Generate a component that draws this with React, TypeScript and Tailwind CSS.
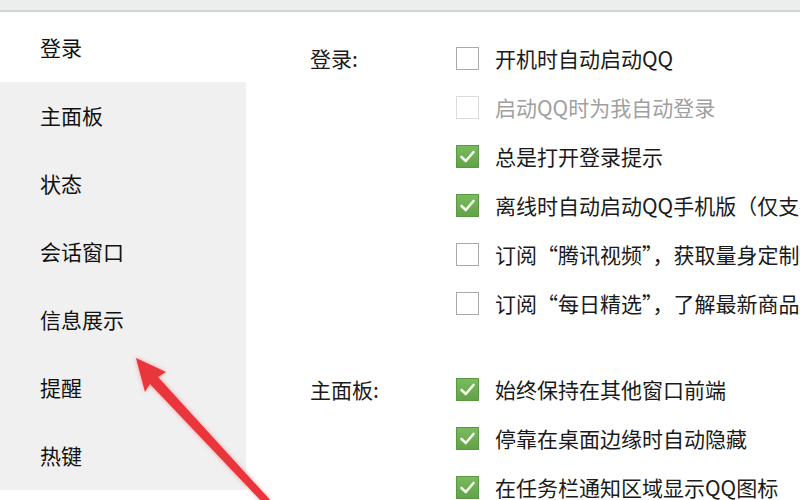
import React from "react";

const font = { fontFamily: '"Noto Sans CJK SC", "Noto Sans", sans-serif' };

type Opt = { text: string; checked?: boolean; disabled?: boolean };

const groups: { label: string; options: Opt[] }[] = [
  {
    label: "登录:",
    options: [
      { text: "开机时自动启动QQ" },
      { text: "启动QQ时为我自动登录", disabled: true },
      { text: "总是打开登录提示", checked: true },
      { text: "离线时自动启动QQ手机版（仅支持安卓手机）", checked: true },
      { text: "订阅“腾讯视频”，获取量身定制的精彩内容" },
      { text: "订阅“每日精选”，了解最新商品资讯" },
    ],
  },
  {
    label: "主面板:",
    options: [
      { text: "始终保持在其他窗口前端", checked: true },
      { text: "停靠在桌面边缘时自动隐藏", checked: true },
      { text: "在任务栏通知区域显示QQ图标", checked: true },
    ],
  },
];

const menu = ["登录", "主面板", "状态", "会话窗口", "信息展示", "提醒", "热键"];

function Box({ checked, disabled }: { checked?: boolean; disabled?: boolean }) {
  if (checked) {
    return (
      <div className="w-[23px] h-[23px] shrink-0 bg-gradient-to-b from-[#7abb5e] to-[#62a248] border border-[#5a9842] flex items-center justify-center">
        <svg width="17" height="17" viewBox="0 0 17 17">
          <path d="M2.5 9 L6.8 13 L14.5 4" fill="none" stroke="#f4fbef" strokeWidth="2.6" strokeLinecap="round" strokeLinejoin="round" />
        </svg>
      </div>
    );
  }
  return (
    <div
      className={
        "w-[23px] h-[23px] shrink-0 bg-white border " +
        (disabled ? "border-[#dcdcdc]" : "border-[#a9a9a9]")
      }
    />
  );
}

export default function App() {
  return (
    <div lang="zh-CN" className="relative w-[800px] h-[500px] overflow-hidden bg-white" style={font}>
      <div className="h-[10px] bg-[#eceeed]" />
      <div className="h-[2px] bg-[#d3d5d4]" />
      <div className="flex">
        {/* sidebar */}
        <div className="w-[246px] shrink-0 flex flex-col pt-[2px]">
          {menu.map((m, i) => (
            <div
              key={m}
              className={
                "h-[68px] flex items-center pl-[40px] text-[21px] text-[#111] " +
                (i === 0 ? "bg-white" : "bg-[#f0f0f0]")
              }
            >
              {m}
            </div>
          ))}
        </div>

        {/* content */}
        <div className="flex-1 flex flex-col pt-[22px] pl-[64px] gap-[37px]">
          {groups.map((g) => (
            <div key={g.label} className="flex">
              <div className="w-[146px] shrink-0 h-[49px] flex items-center text-[21px] text-[#1a1a1a]">
                {g.label}
              </div>
              <div className="flex flex-col">
                {g.options.map((o) => (
                  <div key={o.text} className="h-[49px] flex items-center gap-[16px] whitespace-nowrap">
                    <Box checked={o.checked} disabled={o.disabled} />
                    <span className={"text-[21px] " + (o.disabled ? "text-[#a0a0a0]" : "text-[#1a1a1a]")}>
                      {o.text}
                    </span>
                  </div>
                ))}
              </div>
            </div>
          ))}
        </div>
      </div>

      {/* red annotation arrow */}
      <svg
        className="absolute left-0 top-0 pointer-events-none"
        width="800"
        height="500"
        style={{ filter: "drop-shadow(0 0 2px rgba(255,90,90,0.6))" }}
      >
        <polygon
          points="136,358 166,372 158,377 272,502 264,504 150,384 145,392"
          fill="#e8363c"
        />
      </svg>
    </div>
  );
}
